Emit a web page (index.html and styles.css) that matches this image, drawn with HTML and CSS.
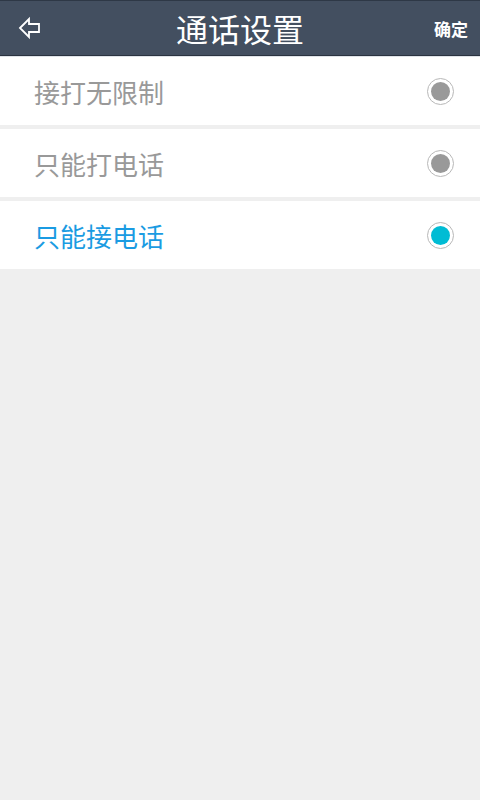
FILE: index.html
```html
<!DOCTYPE html>
<html lang="zh">
<head>
<meta charset="utf-8">
<link rel="stylesheet" href="styles.css">
</head>
<body>
<header class="bar">
  <span class="back">
    <svg width="24" height="24" viewBox="0 0 24 24"><path d="M2 12 L11 3 L11 8 L21 8 L21 16 L11 16 L11 21 Z" fill="none" stroke="#fff" stroke-width="1.8" stroke-linejoin="miter"/></svg>
  </span>
  <h1 class="title">通话设置</h1>
  <span class="ok">确定</span>
</header>
<main class="list">
  <div class="row"><span class="label">接打无限制</span><span class="radio"><span class="dot"></span></span></div>
  <div class="row"><span class="label">只能打电话</span><span class="radio"><span class="dot"></span></span></div>
  <div class="row active"><span class="label">只能接电话</span><span class="radio"><span class="dot"></span></span></div>
</main>
</body>
</html>
```
FILE: styles.css
```css
html, body { margin: 0; padding: 0; }
body {
  width: 480px;
  height: 800px;
  background: #efefef;
  font-family: "Noto Sans CJK SC", "Noto Sans", sans-serif;
}
.bar {
  height: 54px;
  background: #434f60;
  border-top: 1px solid #2e3846;
  border-bottom: 1px solid #2a3340;
  box-shadow: 0 1px 0 #dfe3e8;
  display: flex;
  align-items: center;
  justify-content: space-between;
  padding: 0 12px 0 18px;
  position: relative;
}
.back { display: flex; width: 24px; height: 24px; }
.title {
  margin: 0;
  font-size: 32px;
  font-weight: normal;
  color: #fff;
  position: absolute;
  left: 0; right: 0;
  text-align: center;
  line-height: 54px;
  top: 0;
  pointer-events: none;
}
.ok { color: #fff; font-size: 17px; font-weight: bold; }
.list { display: flex; flex-direction: column; gap: 4px; padding-top: 1px; }
.row {
  height: 68px;
  background: #fff;
  display: flex;
  align-items: center;
  justify-content: space-between;
  padding: 0 26px 0 34px;
}
.label { font-size: 26px; color: #999; }
.active .label { color: #1a9be2; }
.radio {
  width: 25px; height: 25px;
  border: 1px solid #b8b8b8;
  border-radius: 50%;
  display: flex;
  align-items: center;
  justify-content: center;
  background: #fff;
}
.dot { width: 19px; height: 19px; border-radius: 50%; background: #999; }
.active .dot { background: #00bcd4; }
```
